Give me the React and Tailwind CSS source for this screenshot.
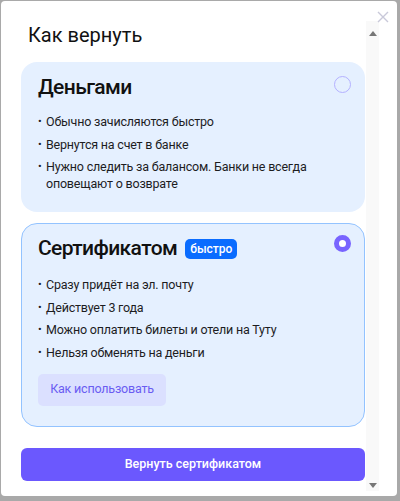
import React from 'react'

const Bullets = ({ items }) => (
  <ul className="flex flex-col gap-[5.5px] text-[12.5px] leading-[17px] tracking-[-0.2px] text-[#1d1d1f]">
    {items.map((item) => (
      <li key={item} className="flex">
        <span className="w-[8px] shrink-0 text-[11px]">•</span>
        <span>{item}</span>
      </li>
    ))}
  </ul>
)

const Radio = ({ checked }) => (
  <div
    className={
      checked
        ? 'w-[17px] h-[17px] rounded-full border-[5px] border-[#7864ff] bg-white shrink-0'
        : 'w-[17px] h-[17px] rounded-full border-[1.5px] border-[#b4b1ff] shrink-0'
    }
  />
)

const App = () => {
  return (
    <div
      className="w-[400px] h-[501px] bg-[#a9a9a9] pt-px pl-px"
      style={{ fontFamily: 'Roboto, "Noto Sans", sans-serif' }}
    >
      <div className="relative w-[396px] h-[495px] bg-white rounded-[4px] flex">
        {/* close */}
        <button className="absolute right-[8px] top-[10px] w-[12px] h-[12px] text-[#c9c9d9]">
          <svg viewBox="0 0 12 12" className="w-[12px] h-[12px]" fill="none" stroke="currentColor" strokeWidth="1.4">
            <path d="M1 1l10 10M11 1L1 11" />
          </svg>
        </button>

        <div className="ml-[20px] mt-[20px] flex">
          <div className="w-[344px] flex flex-col">
            <h2 className="text-[20px] leading-[28px] text-[#111] pl-[7px]">Как вернуть</h2>

            {/* money option */}
            <div className="mt-[13px] bg-[#e5f0ff] rounded-[16px] pt-[11px] pb-[20px] pl-[17px] pr-[14px]">
              <div className="flex justify-between items-start">
                <h3 className="text-[21px] leading-[28px] tracking-[-0.6px] font-medium text-[#111]">Деньгами</h3>
                <div className="mt-[3px]">
                  <Radio />
                </div>
              </div>
              <div className="mt-[12px]">
                <Bullets
                  items={[
                    'Обычно зачисляются быстро',
                    'Вернутся на счет в банке',
                    'Нужно следить за балансом. Банки не всегда оповещают о возврате',
                  ]}
                />
              </div>
            </div>

            {/* certificate option */}
            <div className="mt-[11px] bg-[#e5f0ff] border border-[#93c3ff] rounded-[16px] pt-[10px] pb-[20px] pl-[16px] pr-[13px]">
              <div className="flex justify-between items-start">
                <div className="flex items-center gap-[8px]">
                  <h3 className="text-[21px] leading-[28px] tracking-[-0.6px] font-medium text-[#111]">Сертификатом</h3>
                  <span className="mt-[2px] h-[20px] px-[5px] rounded-[5px] bg-[#0a6cff] text-white text-[12px] leading-[20px] font-medium">
                    быстро
                  </span>
                </div>
                <div className="mt-[1px]">
                  <Radio checked />
                </div>
              </div>
              <div className="mt-[14px]">
                <Bullets
                  items={[
                    'Сразу придёт на эл. почту',
                    'Действует 3 года',
                    'Можно оплатить билеты и отели на Туту',
                    'Нельзя обменять на деньги',
                  ]}
                />
              </div>
              <button className="mt-[13px] w-[128px] h-[32px] rounded-[5px] bg-[#dbe0ff] text-[#6a5cf2] text-[12.5px] tracking-[-0.2px]">
                Как использовать
              </button>
            </div>

            <button className="mt-[21px] h-[33px] rounded-[6px] bg-[#6b58fe] text-white text-[12.5px] font-medium">
              Вернуть сертификатом
            </button>
          </div>

          {/* scrollbar */}
          <div className="ml-[1px] w-[13px] h-[470px] bg-[#f9f9f9] flex flex-col items-center justify-between pt-[10px] pb-[3px]">
            <svg viewBox="0 0 8 5" className="w-[8px] h-[5px]"><path d="M4 0L8 5H0z" fill="#777" /></svg>
            <svg viewBox="0 0 8 5" className="w-[8px] h-[5px]"><path d="M0 0h8L4 5z" fill="#777" /></svg>
          </div>
        </div>
      </div>
    </div>
  )
}

export default App
